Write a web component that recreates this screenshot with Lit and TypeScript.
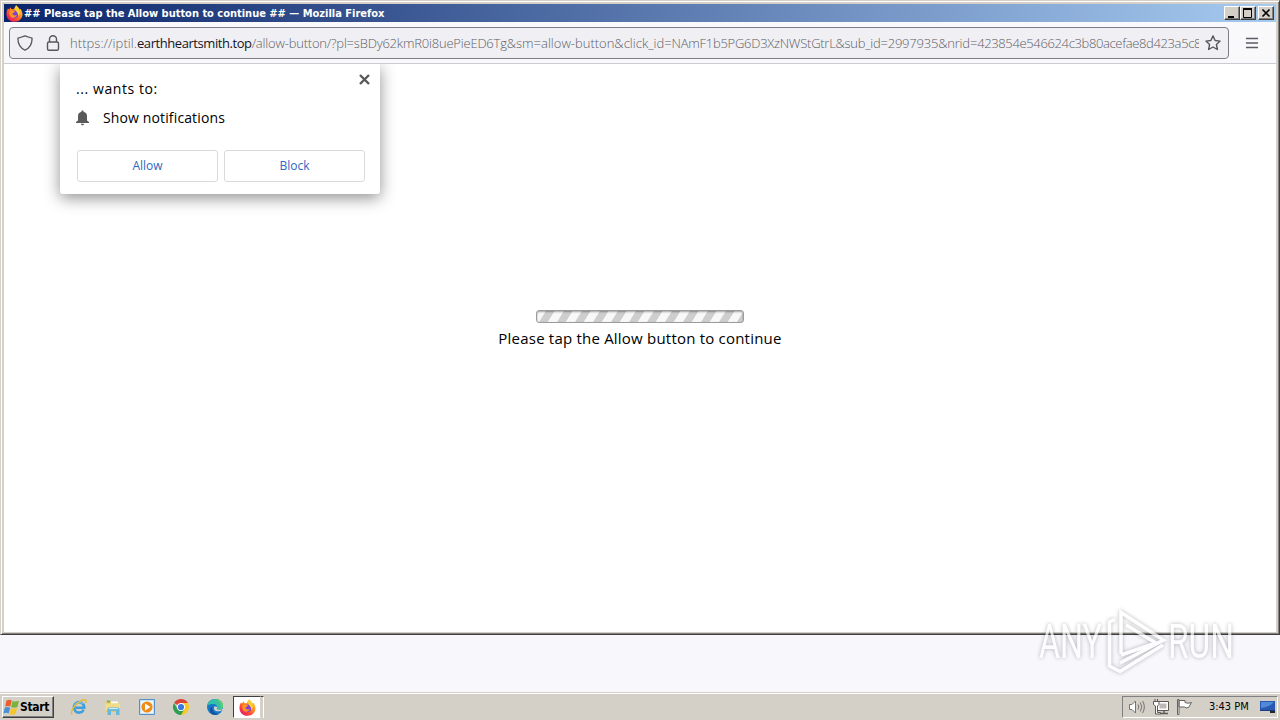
import { LitElement, html, svg, css } from 'lit';
import { customElement } from 'lit/decorators.js';

const firefoxIcon = (size: number) => html`
    <svg width=${size} height=${size} viewBox="0 0 16 16">
        <defs>
            <linearGradient id="fx" x1="1" y1="0" x2="0.2" y2="1">
                <stop offset="0" stop-color="#ffe14a" />
                <stop offset="0.45" stop-color="#ff9020" />
                <stop offset="0.75" stop-color="#ff4038" />
                <stop offset="1" stop-color="#d81878" />
            </linearGradient>
        </defs>
        <path
            fill="url(#fx)"
            d="M1.8 3.2 3 4.3 4.3 2.2 5 3.7 7.2 4 9.5.3c1 1.5 2.3 2 3 3.2l.4 1 .7-1C16.5 8 16 11.500 13 14.200 10.500 16.300 5.500 16.300 2.900 14 .100 11.500-.4 7 1.800 3.200Z"
        />
        <circle cx="8" cy="8.800" r="3.600" fill="#8040d8" />
        <path fill="#ff9422" d="M3.500 5.500c2-.8 3.200.2 5 .2-.2 1.300-1.500 1.500-2.500 2.300.3 1.800 2.600 2.300 4.300 1.200-.7 2.500-3.700 3.600-5.800 2C3 10 2.700 7.500 3.500 5.500Z" />
        <path fill="#ffd030" d="M9.500.3c1 1.500 3.300 2.500 3.500 6 .1 2-.7 3.300-1.600 4 .6-3.500-2.800-4.300-2.800-6.600 0-1.500.3-2.200.9-3.400Z" />
    </svg>
`;

const ieIcon = html`
    <svg width="18" height="18" viewBox="0 0 18 18" fill="none">
        <path d="M13.700 11.700A5.200 5.200 0 1 1 14.200 8.800V9.700H5" stroke="#3e9fdc" stroke-width="2.600" />
        <path d="M4.500 7.500A5 5 0 0 1 13 6" stroke="#8ad0f4" stroke-width="1" />
        <path d="M2.200 16.300C-.5 14.800 4.300 6.500 10.500 3.100c4-2.200 6.600-1.600 5.200 2" stroke="#e6bb32" stroke-width="1.500" />
    </svg>
`;

const explorerIcon = html`
    <svg width="18" height="18" viewBox="0 0 18 18">
        <path fill="#e6ca68" d="M2 3h5l1 1.500h7V14H2Z" />
        <path fill="#66b85c" d="M3 2.500h3v2H3Z" />
        <path fill="#fff" d="M7 3.500h7v2H7Z" />
        <path fill="#f3dc88" d="M1.500 5.500h14.500v6.500h-14.500Z" />
        <path fill="#67b6dc" d="M3.500 10.500 5 9.500h9l1.500 1V17h-3.500v-4H7v4H3.500Z" />
        <path fill="#c6e8f6" d="M5 10h9v1.200H5Z" />
    </svg>
`;

const playerIcon = html`
    <svg width="18" height="18" viewBox="0 0 18 18">
        <path fill="#c8e2f4" stroke="#5590c8" d="M1.500 1.500h15v15h-15Z" />
        <path fill="#eef7fc" d="M3 3h12v12H3Z" />
        <circle cx="9" cy="9" r="5.600" fill="#f08a18" />
        <path fill="#fff" d="M7 5.500 12.500 9 7 12.500Z" />
    </svg>
`;

const chromeIcon = html`
    <svg width="18" height="18" viewBox="0 0 18 18">
        <path fill="#dc4437" d="M9 9 2.070 5a8 8 0 0 1 13.860 0Z" />
        <path fill="#f8c928" d="M9 9V5h6.930A8 8 0 0 1 9 17l-1-1Z" />
        <path fill="#2e9e50" d="M9 17A8 8 0 0 1 2.070 5L5.500 11 9 9l3.460 2Z" />
        <circle cx="9" cy="9" r="4" fill="#fff" />
        <circle cx="9" cy="9" r="3.100" fill="#3b78e0" />
    </svg>
`;

const edgeIcon = html`
    <svg width="18" height="18" viewBox="0 0 18 18">
        <circle cx="9" cy="9" r="8" fill="#1878c8" />
        <path fill="#34bfa8" d="M1.200 7.500C2 3.500 5.200 1 9 1c5 0 8 3.500 8 6.700 0 3-2.500 4.300-5 4.200-1.800 0-2.200-.8-1.400-1.600C12 8.500 10.500 6 7.500 6 4.600 6 2.300 6.700 1.200 7.500Z" />
        <path fill="#5fce68" d="M10 1.100c4.500.4 7 3.600 7 6.600 0 2-1.200 3.300-2.600 3.800C15.500 7 14 3.500 10 1.100Z" />
        <path fill="#14509c" d="M6.500 8.500C5.500 12 8 16 12.500 15.900 8 18.500 3.500 15.500 4 11.500c.2-1.500 1.200-2.500 2.500-3Z" />
        <path fill="#d4d0c8" d="M8.300 8.500c-1.300 2.500.5 4.800 3.800 4.800 1.800 0 3.200-.6 4-1l1.900-.8V10l-2.500 1.400c-3 1-5.200.2-4.700-.9.800-1.200 0-2-1.200-2Z" />
    </svg>
`;

const windowsFlag = html`
    <svg width="17" height="17" viewBox="0 0 17 17">
        <path fill="#e8602c" d="M3.500 1.500c2-1 3.800-.8 5.300 0L7.300 7.600C6 6.800 4.300 6.700 2.200 7.600Z" />
        <path fill="#78b43c" d="M9.600 1.900c2 .8 4 .9 6.400-.2L14.400 8c-2.300 1-4.400.7-6.300-.1Z" />
        <path fill="#4a90d4" d="M1.900 8.600c2-.9 3.800-.7 5.300.1L5.700 14.500c-1.500-.8-3.400-.9-5.400 0Z" />
        <path fill="#f6c42c" d="M8 9.100c1.800.8 4 1 6.100 0l-1.500 6c-2.300 1-4.200.8-6.100-.1Z" />
    </svg>
`;

const WATERMARK_PLAY = svg`
    <path d="M81 13.500 75.500 16V60L86 65.500 129 39" />
    <path d="M87 48V6.500L129.500 34 86 57" />
    <path d="M92 19 122 37 87 49" />
`;

/** Title bar, toolbar and page of the browser window. */
@customElement('browser-window')
export class BrowserWindow extends LitElement {
    static styles = css`
        :host {
            display: flex;
            flex-direction: column;
            box-sizing: border-box;
            height: 635px;
            padding: 2px;
            background: #d4d0c8;
            border: 1px solid;
            border-color: #d4d0c8 #404040 #404040 #d4d0c8;
            box-shadow: inset 1px 1px #fff, inset -1px -1px #808080;
        }

        svg {
            display: block;
            flex: none;
        }

        .title-bar {
            display: flex;
            align-items: center;
            height: 18px;
            margin: 1px 1px 0;
            flex: none;
            box-sizing: border-box;
            padding: 0 2px;
            background: linear-gradient(90deg, #0a246a, #a6caf0);
        }

        .title {
            flex: 1;
            margin-left: 1px;
            padding-top: 1px;
            color: #fff;
            font: bold condensed 11px/17px 'DejaVu Sans', sans-serif;
            letter-spacing: -0.01px;
            white-space: pre;
        }

        .control {
            display: grid;
            place-items: center;
            box-sizing: border-box;
            width: 16px;
            height: 14px;
            background: #d4d0c8;
            border: 1px solid;
            border-color: #fff #404040 #404040 #fff;
            box-shadow: inset -1px -1px #808080;
        }

        .control.close {
            margin-left: 2px;
        }

        .toolbar {
            display: flex;
            align-items: center;
            flex: none;
            box-sizing: border-box;
            height: 42px;
            margin: 0 1px;
            padding: 0 16px 0 5px;
            background: #f9f9fb;
            border-bottom: 1px solid #cbcbd4;
        }

        .address {
            display: flex;
            align-items: center;
            box-sizing: border-box;
            width: 1220px;
            height: 32px;
            padding: 0 7px;
            background: #f0f0f4;
            border: 1px solid #7c7c86;
            border-radius: 4px;
        }

        .lock {
            margin-left: 12px;
        }

        .url {
            flex: 1;
            overflow: hidden;
            margin: 0 6px 0 9px;
            color: #5e5e66;
            font: 300 13px/20px 'Open Sans', sans-serif;
            white-space: nowrap;
        }

        .scheme {
            letter-spacing: 0.06px;
        }

        .host {
            color: #15141a;
            font-weight: 400;
            letter-spacing: -0.43px;
        }

        .path {
            letter-spacing: -0.2px;
        }

        .click {
            letter-spacing: -0.26px;
        }

        .sub {
            letter-spacing: -0.2px;
        }

        .nrid {
            letter-spacing: -0.36px;
        }

        .menu {
            margin-left: 15px;
        }

        .page {
            position: relative;
            display: flex;
            flex-direction: column;
            align-items: center;
            flex: 1;
            overflow: hidden;
            margin: 0 1px;
            background: #fff;
        }

        .progress {
            box-sizing: border-box;
            width: 208px;
            height: 13px;
            margin-top: 246px;
            border: 1px solid #9c9c9c;
            border-radius: 3px;
            background: repeating-linear-gradient(122deg, #f8f8f8 0 7.100px, #cecece 8px 14.600px, #f8f8f8 15.260px);
            box-shadow: inset 0 1px 2px rgba(0, 0, 0, 0.35);
        }

        .hint {
            margin-top: 4px;
            color: #000;
            font: 15px/22px 'Open Sans', sans-serif;
            letter-spacing: 0.21px;
            white-space: nowrap;
        }

        .prompt {
            position: absolute;
            top: 0;
            left: 56px;
            display: flex;
            flex-direction: column;
            box-sizing: border-box;
            width: 320px;
            height: 130px;
            padding: 14px 15px 12px 16px;
            background: #fff;
            border-radius: 0 0 3px 3px;
            box-shadow: 0 4px 16px rgba(0, 0, 0, 0.44);
            color: #000;
            font: 14px/22px 'Open Sans', sans-serif;
        }

        .prompt-head {
            display: flex;
            justify-content: space-between;
            letter-spacing: 0.58px;
        }

        .dismiss {
            margin: -5px -6px 0 0;
        }

        .permission {
            display: flex;
            align-items: center;
            gap: 13px;
            margin-top: 7px;
            letter-spacing: 0.13px;
        }

        .actions {
            display: grid;
            grid-template-columns: 1fr 1fr;
            gap: 6px;
            margin: auto 0 0 1px;
        }

        .action {
            box-sizing: border-box;
            height: 32px;
            padding: 0;
            background: #fff;
            border: 1px solid #d9dadd;
            border-radius: 3px;
            color: #2d68c4;
            font: 12px/30px 'Open Sans', sans-serif;
        }
    `;

    render() {
        return html`
            <div class="title-bar">
                ${firefoxIcon(17)}
                <span class="title">## Please tap the Allow button to continue ## — Mozilla Firefox</span>
                <div class="control">
                    <svg width="10" height="10"><path d="M1 8h6v2H1Z" /></svg>
                </div>
                <div class="control">
                    <svg width="10" height="10"><path d="M.5 1.500h8v8h-8Z" fill="none" stroke="#000" /><path d="M0 0h9v2H0Z" /></svg>
                </div>
                <div class="control close">
                    <svg width="10" height="10"><path d="m1.500 1.500 7 7m0-7-7 7" stroke="#000" stroke-width="1.700" /></svg>
                </div>
            </div>
            <div class="toolbar">
                <div class="address">
                    <svg width="16" height="16" viewBox="0 0 16 16" fill="none" stroke="#56565f" stroke-width="1.300">
                        <path d="M8 .8 14.300 3c.6 0 .8.300.8.800C15 9 13.500 12.800 8 15.200 2.500 12.800 1 9 .9 3.800c0-.5.200-.8.800-.8Z" stroke-linejoin="round" />
                    </svg>
                    <svg class="lock" width="16" height="16" viewBox="0 0 16 16" fill="none" stroke="#56565f" stroke-width="1.400">
                        <rect x="2.500" y="7" width="11" height="8.200" rx="1.500" />
                        <path d="M4.500 7V4.200a3.500 3.500 0 0 1 7 0V7" />
                    </svg>
                    <div class="url"><span class="scheme">https://iptil.</span><span class="host">earthheartsmith.top</span><span class="path">/allow-button/?pl=sBDy62kmR0i8uePieED6Tg</span><span>&amp;sm=allow-button&amp;click_id=</span><span class="click">NAmF1b5PG6D3XzNWStGtrL&amp;sub_id=</span><span class="sub">2997935&amp;nrid=</span><span class="nrid">423854e546624c3b80acefae8d423a5c8</span></div>
                    <svg width="16" height="16" viewBox="0 0 16 16" fill="none" stroke="#56565f" stroke-width="1.400" stroke-linejoin="round">
                        <path d="m8 .9 2.100 4.600 5 .6-3.700 3.400 1 5L8 12l-4.400 2.500 1-5L.9 6.100l5-.6Z" />
                    </svg>
                </div>
                <svg class="menu" width="16" height="16"><path d="M2 3.500h12M2 8h12M2 12.500h12" stroke="#5b5b66" stroke-width="1.300" /></svg>
            </div>
            <div class="page">
                <div class="progress"></div>
                <div class="hint">Please tap the Allow button to continue</div>
                <div class="prompt">
                    <div class="prompt-head">
                        <span>... wants to:</span>
                        <svg class="dismiss" width="12" height="12"><path d="m1 2 9 9m0-9-9 9" stroke="#5a5a5a" stroke-width="2.400" /></svg>
                    </div>
                    <div class="permission">
                        <svg width="14" height="16" viewBox="0 0 14 16" fill="#5a5a5a">
                            <path d="M6.500.5c.7 0 1.100.5 1.100 1.200C9.800 2.300 11 4 11 6v4.500l2 1.500v1H0v-1l2-1.500V6c0-2 1.200-3.700 3.400-4.300C5.400 1 5.800.5 6.500.5ZM5 13.700h3c0 2-3 2-3 0Z" />
                        </svg>
                        <span>Show notifications</span>
                    </div>
                    <div class="actions">
                        <button class="action">Allow</button>
                        <button class="action">Block</button>
                    </div>
                </div>
            </div>
        `;
    }
}

/** Start button, quick launch icons and notification area. */
@customElement('task-bar')
export class TaskBar extends LitElement {
    static styles = css`
        :host {
            display: flex;
            align-items: center;
            box-sizing: border-box;
            height: 28px;
            padding: 2px 2px 1px;
            background: #d4d0c8;
            border-top: 1px solid #d4d0c8;
            box-shadow: inset 0 1px #fff;
        }

        svg {
            display: block;
            flex: none;
        }

        .start {
            display: flex;
            align-items: center;
            box-sizing: border-box;
            width: 52px;
            height: 22px;
            border: 1px solid;
            border-color: #fff #404040 #404040 #fff;
            box-shadow: inset -1px -1px #808080;
            color: #000;
            font: bold condensed 12px/20px 'DejaVu Sans', sans-serif;
            letter-spacing: -0.35px;
        }

        .launchers {
            display: flex;
            gap: 16px;
            margin-left: 16px;
        }

        .running {
            display: grid;
            place-items: center;
            box-sizing: border-box;
            width: 28px;
            height: 22px;
            margin-left: 9px;
            background: #fff;
            border: 1px solid;
            border-color: #404040 #d4d0c8 #fff #404040;
        }

        .stack {
            width: 3px;
            height: 22px;
            box-sizing: border-box;
            border: solid #404040;
            border-width: 1px 0 0;
            border-right: 1px solid #fff;
        }

        .tray {
            display: flex;
            align-items: center;
            box-sizing: border-box;
            width: 156px;
            height: 22px;
            margin-left: auto;
            padding-left: 5px;
            border: 1px solid;
            border-color: #808080 #fff #fff #808080;
        }

        .network {
            margin-left: 7px;
        }

        .flag {
            margin-left: 6px;
        }

        .clock {
            margin: 0 11px 0 16px;
            color: #000;
            font: condensed 11px/20px 'DejaVu Sans', sans-serif;
            letter-spacing: -0.02px;
            white-space: nowrap;
        }
    `;

    render() {
        return html`
            <div class="start">${windowsFlag}<span>Start</span></div>
            <div class="launchers">${ieIcon}${explorerIcon}${playerIcon}${chromeIcon}${edgeIcon}</div>
            <div class="running">${firefoxIcon(17)}</div>
            <div class="stack"></div>
            <div class="tray">
                <svg width="18" height="16" viewBox="0 0 18 16" fill="none" stroke="#77746e">
                    <path d="M1.500 5.500h2.500L7.500 2v12L4 10.500H1.500Z" fill="#fff" />
                    <path d="M10 5.500q1.700 2.500 0 5M12.300 3.500q3 4.500 0 9M14.600 2q3.500 6 0 12" />
                </svg>
                <svg class="network" width="17" height="16" viewBox="0 0 17 16" fill="none" stroke="#5c5954">
                    <path d="M4.500 2.500h11v9h-11Z" fill="#fff" />
                    <path d="M6.500 4.500h7v5h-7Z" fill="#bcbab4" stroke="none" />
                    <path d="M7 14.500h8M11 12v2" stroke-width="1.400" />
                    <path d="M.5 2.500h5.500v3L4.500 7v6.500h3v1.500h-5V7L.5 5.500ZM2 0v2.500M4.500 0v2.500" fill="#fff" />
                </svg>
                <svg class="flag" width="17" height="16" viewBox="0 0 17 16" stroke="#66635e">
                    <path d="M1.500.5h1.500v15H1.500ZM3 1.500h6v2q3 1.500 6.500 0L12.500 8.500Q10 9.500 8.500 8H3Z" fill="#fff" />
                </svg>
                <span class="clock">3:43 PM</span>
                <svg width="16" height="14" viewBox="0 0 16 14">
                    <path fill="#2858b0" d="M0 1h15v10H0Z" />
                    <path fill="#4f8ad8" d="M1 2h13Q10 7 1 8Z" />
                    <path fill="#173b80" d="M0 10h15v1H0Z" />
                    <path fill="#20242c" d="M10 11h5v2h-5Z" />
                </svg>
            </div>
        `;
    }
}

@customElement('app-root')
export class AppRoot extends LitElement {
    static styles = css`
        :host {
            position: relative;
            display: flex;
            flex-direction: column;
            justify-content: space-between;
            width: 1280px;
            height: 720px;
            overflow: hidden;
            background: #f8f7fc;
        }

        .watermark {
            position: absolute;
            top: 606px;
            left: 1034px;
            filter: drop-shadow(0 0 2px rgba(0, 0, 0, 0.4));
            opacity: 0.72;
        }

        .watermark text {
            fill: #fff;
            font: 49px Roboto, sans-serif;
        }

        .watermark path {
            fill: none;
            stroke: #fff;
            stroke-width: 3.5px;
        }
    `;

    render() {
        return html`
            <browser-window></browser-window>
            <task-bar></task-bar>
            <svg class="watermark" width="230" height="74">
                <text x="5" y="52" textLength="63" lengthAdjust="spacingAndGlyphs">ANY</text>
                ${WATERMARK_PLAY}
                <text x="134" y="52" textLength="66" lengthAdjust="spacingAndGlyphs">RUN</text>
            </svg>
        `;
    }
}

declare global {
    interface HTMLElementTagNameMap {
        'app-root': AppRoot;
        'browser-window': BrowserWindow;
        'task-bar': TaskBar;
    }
}
